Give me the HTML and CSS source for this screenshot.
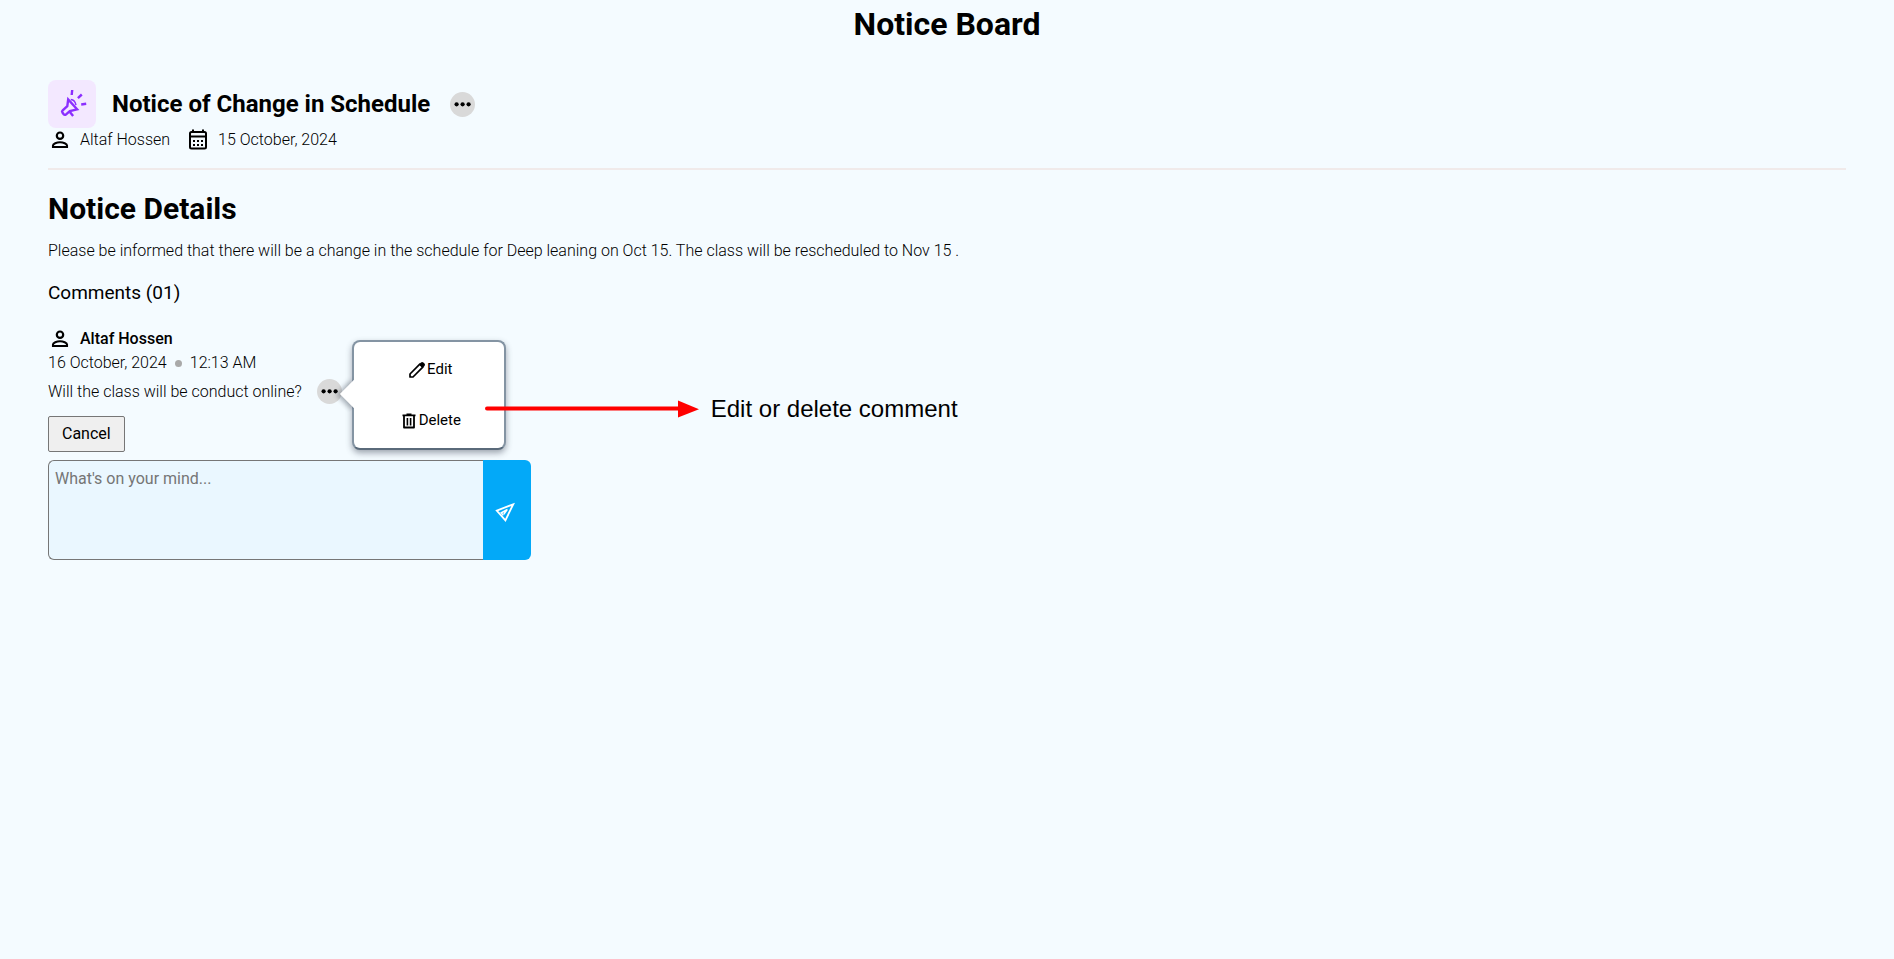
FILE: index.html
```html
<!DOCTYPE html>
<html lang="en">
<head>
<meta charset="utf-8">
<title>Notice Board</title>
<link rel="stylesheet" href="styles.css">
</head>
<body>
<svg class="sprite" aria-hidden="true">
  <symbol id="person" viewBox="0 0 24 24"><circle cx="12" cy="7.700" r="3.200" fill="none" stroke="#000" stroke-width="2.200"/><path d="M5 19v-1.600c0-1.600 3.700-3.100 7-3.100s7 1.500 7 3.100V19z" fill="none" stroke="#000" stroke-width="2.100"/></symbol>
  <symbol id="dots" viewBox="0 0 25 25"><circle cx="6.6" cy="12.3" r="2.1"/><circle cx="12.6" cy="12.3" r="2.1"/><circle cx="18.6" cy="12.3" r="2.1"/></symbol>
</svg>
<h1 class="page-title">Notice Board</h1>
<main class="notice">
  <header class="notice-header">
    <div class="notice-heading">
      <span class="notice-badge">
        <svg viewBox="0 0 48 48" aria-hidden="true"><path d="M24.200 10l-.5 5M33.800 14.500l-3.900 3.600M33.200 24.500l5-.7M20.200 19.400l-.9 6.700-4.600 4.200c-.9.800-.9 1.400-.3 2.200l1.300 1.700c.7.900 1.500.9 2.400.1l3.700-3.300 7.300-1.700zM21.500 31.500l3.600 4.500"/><path class="thin" d="M22.800 19.500q4.300.5 5.200 5.600"/></svg>
      </span>
      <h2 class="notice-title">Notice of Change in Schedule</h2>
      <button class="more" type="button" aria-label="Notice options"><svg><use href="#dots"/></svg></button>
    </div>
    <div class="meta">
      <span class="meta-item"><svg class="icon"><use href="#person"/></svg>Altaf Hossen</span>
      <span class="meta-item"><svg class="icon" viewBox="0 0 24 24"><rect x="4" y="4" width="16" height="16.500" rx="1.500" fill="none" stroke="#000" stroke-width="2"/><path d="M4 7.500h16v2H4zM6 1.500h2V5H6zm10 0h2V5h-2zM7 12h2v2H7zm4 0h2v2h-2zm4 0h2v2h-2zm-8 4h2v2H7zm4 0h2v2h-2zm4 0h2v2h-2z"/></svg>15 October, 2024</span>
    </div>
  </header>
  <h2 class="details-title">Notice Details</h2>
  <p class="details-text">Please be informed that there will be a change in the schedule for Deep leaning on Oct 15. The class will be rescheduled to Nov 15 .</p>
  <h3 class="comments-title">Comments (01)</h3>
  <article class="comment">
    <div class="author"><svg class="icon"><use href="#person"/></svg>Altaf Hossen</div>
    <div class="stamp"><span>16 October, 2024</span><span class="bullet"></span><span>12:13 AM</span></div>
    <div class="comment-line">
      <p class="comment-text">Will the class will be conduct online?</p>
      <div class="menu-anchor">
        <button class="more" type="button" aria-label="Comment options"><svg><use href="#dots"/></svg></button>
        <div class="popover">
          <button class="action" type="button"><svg viewBox="0 0 20 20"><path d="M3 17v-3L12.800 4.200l3 3L6 17z" fill="none" stroke="#000" stroke-width="1.700" stroke-linejoin="round"/><path d="M12 4.300l2-1.900q1.200-1 2.400.1l1.100 1.100q1.100 1.200 0 2.400l-1.900 1.900z"/></svg>Edit</button>
          <button class="action" type="button"><svg viewBox="0 0 20 20"><path d="M3.500 4.300h13M7.500 3.400h5M5 4.300V16.500h10V4.300" fill="none" stroke="#000" stroke-width="1.800" stroke-linejoin="round"/><path d="M7.600 7h1.600v7.500H7.600zM10.800 7h1.600v7.500h-1.600z"/></svg>Delete</button>
        </div>
        <div class="callout">
          <svg viewBox="0 0 214 18" aria-hidden="true"><path d="M2 8.500H196" stroke="#f00" stroke-width="4" stroke-linecap="round"/><path d="M193 .5L214 9.300 193 17.500z" fill="#f00"/></svg>
          <span>Edit or delete comment</span>
        </div>
      </div>
    </div>
  </article>
  <button class="cancel" type="button">Cancel</button>
  <form class="composer">
    <textarea class="composer-input" aria-label="Comment" placeholder="What's on your mind..."></textarea>
    <button class="send" type="button" aria-label="Send"><svg viewBox="0 0 24 24"><path d="M18.200 6.300L1.800 12.600 10.400 22.300z"/><path class="fold" d="M12.500 11.500L6.300 14.800l2 2.600M12 11.800l-3.200 4.400"/></svg></button>
  </form>
</main>
</body>
</html>
```
FILE: styles.css
```css
* { box-sizing: border-box; }

body {
  margin: 0;
  background: #f4fbff;
  color: #000;
  font-family: Roboto, sans-serif;
  font-size: 16px;
  line-height: 24px;
}

h1, h2, h3, p { margin: 0; }
button, textarea { font: inherit; color: inherit; }
button { cursor: pointer; }
svg { display: block; flex: none; }
.sprite { position: absolute; width: 0; height: 0; }
.icon { width: 24px; height: 24px; }

.page-title {
  font-size: 32px;
  line-height: 48px;
  text-align: center;
}

.notice { padding: 32px 48px; }

.notice-header {
  padding-bottom: 16px;
  border-bottom: 2px solid #f0eaea;
}
.notice-heading { display: flex; align-items: center; }
.notice-badge {
  width: 48px;
  height: 48px;
  margin-right: 16px;
  border-radius: 8px;
  background: #f3e8ff;
}
.notice-badge path {
  fill: none;
  stroke: #8b2fff;
  stroke-width: 2.400;
}
.notice-badge .thin { stroke-width: 1.400; }
.notice-title { margin-right: 20px; font-size: 24px; line-height: 36px; }

.more {
  display: block;
  width: 25px;
  height: 25px;
  padding: 0;
  border: 0;
  border-radius: 50%;
  background: #d9d9d9;
}
.more svg { width: 25px; height: 25px; }

.meta { display: flex; gap: 16px; font-weight: 300; }
.meta-item { display: flex; gap: 8px; }

.details-title {
  margin-top: 16px;
  font-size: 30px;
  line-height: 45px;
}
.details-text { margin-top: 8px; font-weight: 300; }
.comments-title {
  margin-top: 16px;
  font-size: 19px;
  font-weight: 400;
  line-height: 28px;
}

.comment { margin-top: 20px; }
.author { display: flex; gap: 8px; font-weight: 500; }
.stamp { display: flex; align-items: center; gap: 8px; font-weight: 300; }
.bullet { width: 7px; height: 7px; border-radius: 50%; background: #a9a9a9; }
.comment-line { display: flex; align-items: center; gap: 15px; margin-top: 4px; }
.comment-text { font-weight: 300; }

.menu-anchor { position: relative; }
.popover {
  position: absolute;
  left: 35px;
  top: -39px;
  display: flex;
  flex-direction: column;
  align-items: center;
  gap: 28px;
  width: 154px;
  padding: 16px 0 16px 2px;
  border: 2px solid #8494a3;
  border-bottom-color: #5a6a7a;
  border-radius: 8px;
  background: #fff;
  box-shadow: 0 3px 6px rgba(50, 60, 75, .45);
}
.popover::before {
  content: "";
  position: absolute;
  left: -10px;
  top: 42px;
  width: 20px;
  height: 20px;
  background: #fff;
  box-shadow: -2px 3px 5px rgba(50, 60, 75, .4);
  clip-path: polygon(-8px -8px, 100% 100%, 100% 28px, -8px 28px);
  transform: rotate(45deg);
}
.action {
  position: relative;
  display: flex;
  align-items: center;
  padding: 0;
  border: 0;
  background: none;
  font-size: 15px;
  line-height: 23px;
}
.action svg { width: 20px; height: 20px; }

.callout {
  position: absolute;
  left: 168px;
  top: 14px;
  display: flex;
  align-items: center;
  gap: 12px;
  font-family: "Liberation Sans", Arial, sans-serif;
  font-size: 24px;
  line-height: 32px;
  white-space: nowrap;
}
.callout svg { width: 214px; height: 18px; }

.cancel {
  display: block;
  margin-top: 12px;
  padding: 5px 13px;
  border: 1px solid #767676;
  border-radius: 2px;
  background: #efefef;
}

.composer { display: flex; width: 483px; max-width: 100%; margin-top: 8px; }
.composer-input {
  flex: 1;
  height: 100px;
  padding: 6px;
  border: 1px solid #767676;
  border-right: 0;
  border-radius: 6px 0 0 6px;
  background: #eaf7ff;
  resize: none;
  outline: 0;
}
.composer-input::placeholder { color: #757575; }
.send {
  display: grid;
  place-items: center;
  width: 48px;
  padding: 0;
  border: 0;
  border-radius: 0 6px 6px 0;
  background: #03a9f8;
}
.send svg { width: 24px; height: 24px; }
.send path { fill: none; stroke: #fff; stroke-width: 1.800; }
.send .fold { stroke-width: 1.500; }
```
